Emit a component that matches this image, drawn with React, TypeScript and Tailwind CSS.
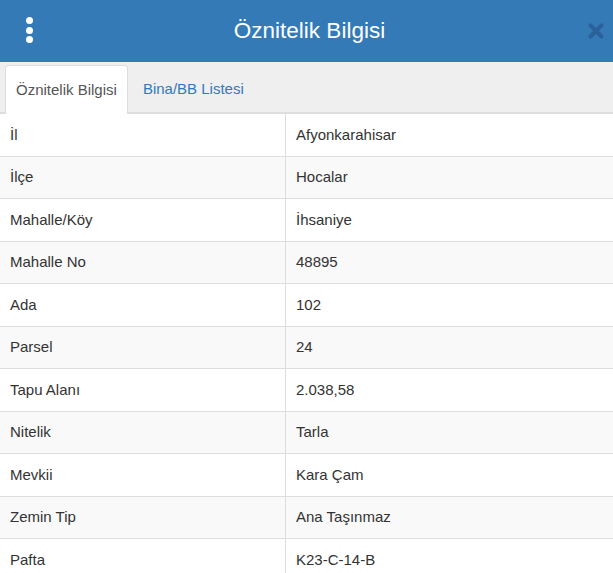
import React from 'react';

const rows: [string, string][] = [
  ['İl', 'Afyonkarahisar'],
  ['İlçe', 'Hocalar'],
  ['Mahalle/Köy', 'İhsaniye'],
  ['Mahalle No', '48895'],
  ['Ada', '102'],
  ['Parsel', '24'],
  ['Tapu Alanı', '2.038,58'],
  ['Nitelik', 'Tarla'],
  ['Mevkii', 'Kara Çam'],
  ['Zemin Tip', 'Ana Taşınmaz'],
  ['Pafta', 'K23-C-14-B'],
];

export default function App() {
  return (
    <div className="h-[573px] w-[613px] overflow-hidden bg-white font-['Liberation_Sans',Arial,sans-serif] text-[15px] text-[#333]">
      {/* header */}
      <div className="relative flex h-[62px] items-center justify-center bg-[#337ab7]">
        <button className="absolute left-[22px] top-[16px] flex h-[28px] w-[14px] flex-col items-center justify-between py-[1px]">
          <span className="h-[7px] w-[7px] rounded-full bg-white" />
          <span className="h-[7px] w-[7px] rounded-full bg-white" />
          <span className="h-[7px] w-[7px] rounded-full bg-white" />
        </button>
        <h1 className="ml-[6px] text-[22.5px] leading-none text-white">Öznitelik Bilgisi</h1>
        <button className="absolute right-[8px] top-[22px]">
          <svg width="18" height="18" viewBox="0 0 18 18">
            <path d="M3.5 3.5 L14.5 14.5 M14.5 3.5 L3.5 14.5" stroke="#2b619a" strokeWidth="4.2" strokeLinecap="round" />
          </svg>
        </button>
      </div>

      {/* tabs */}
      <div className="flex h-[52px] items-end border-b-2 border-[#ddd] bg-[#efefef] pl-[5px]">
        <div className="-mb-[2px] flex h-[49px] items-center rounded-t-[4px] border border-b-0 border-[#ddd] bg-white px-[10px] text-[#555]">
          Öznitelik Bilgisi
        </div>
        <div className="-mb-[2px] ml-[4px] flex h-[49px] items-center px-[11px] text-[#337ab7]">
          Bina/BB Listesi
        </div>
      </div>

      {/* table */}
      <div>
        {rows.map(([label, value], i) => (
          <div
            key={label}
            className={`grid h-[42.5px] grid-cols-[285px_1fr] border-b border-[#ddd] ${i % 2 === 1 ? 'bg-[#f9f9f9]' : 'bg-white'}`}
          >
            <div className="flex items-center px-[10px]">{label}</div>
            <div className="flex items-center border-l border-[#ddd] px-[10px]">{value}</div>
          </div>
        ))}
      </div>
    </div>
  );
}
